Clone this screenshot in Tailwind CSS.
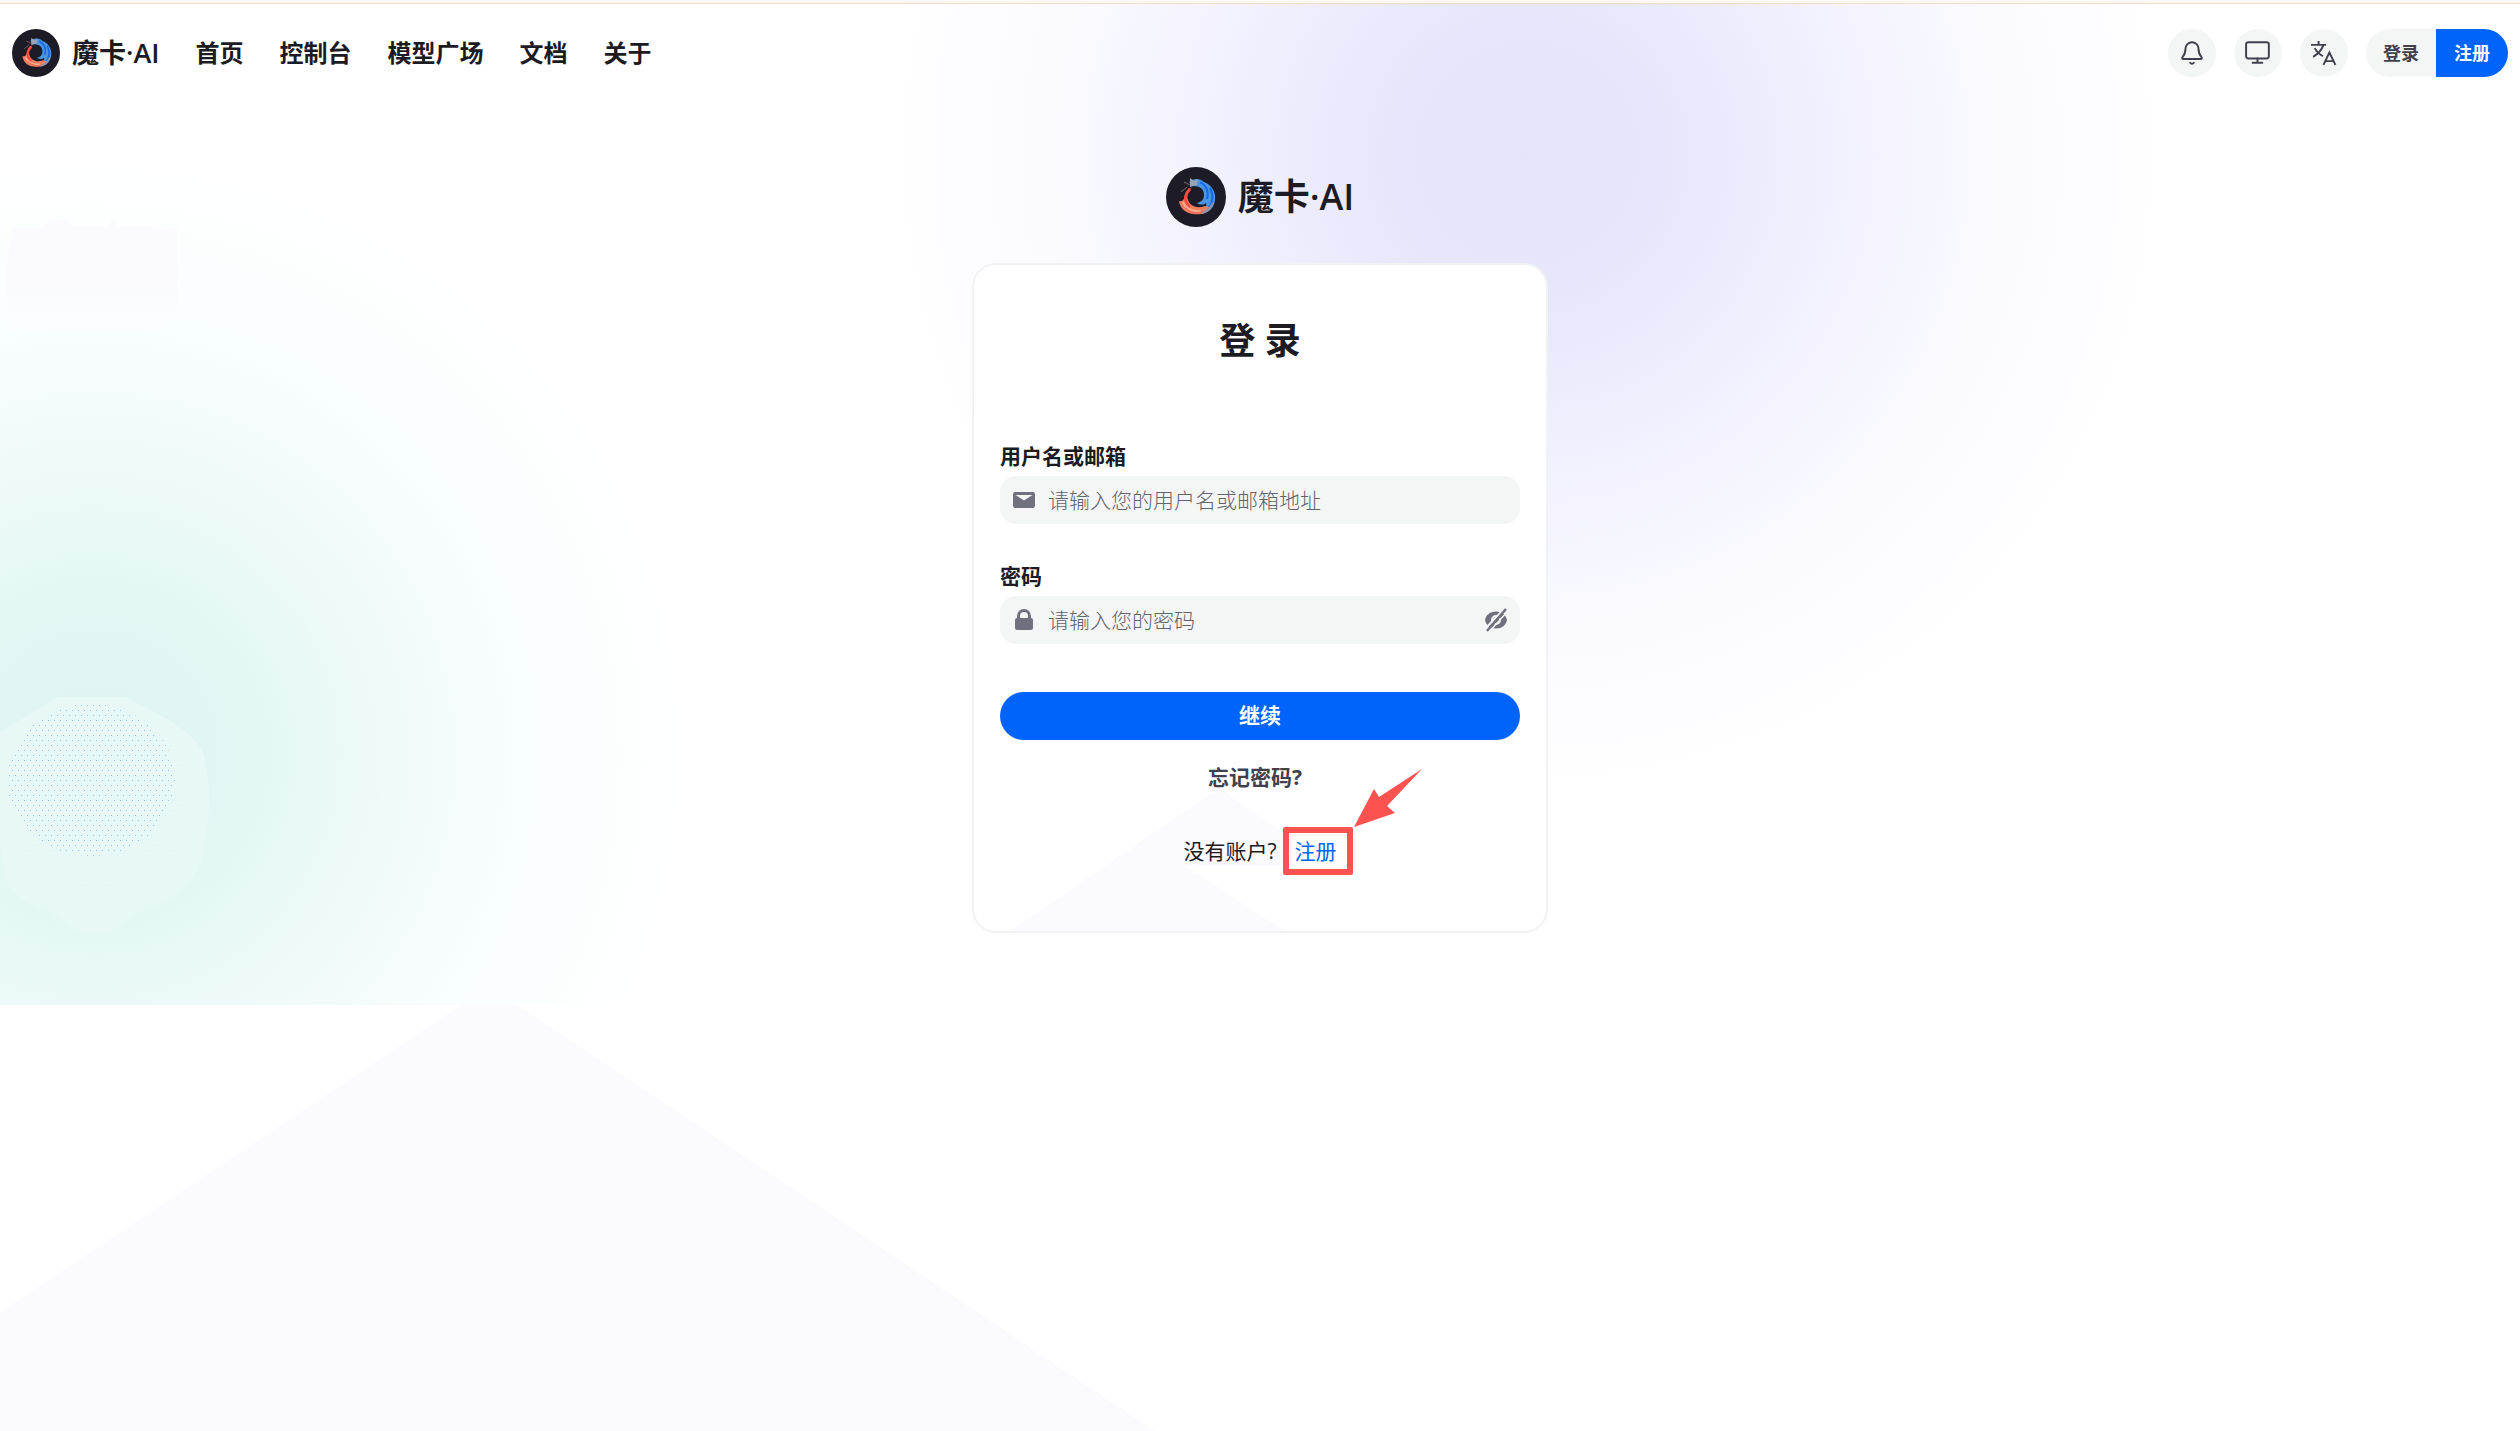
<!DOCTYPE html>
<html lang="zh-CN">
<head>
    <meta charset="UTF-8">
    <meta name="viewport" content="width=device-width, initial-scale=1.0">
    <title>魔卡·AI - 登录</title>
    <script src="https://cdn.jsdelivr.net/npm/@tailwindcss/browser@4"></script>
</head>
<body class="relative min-h-screen overflow-x-hidden bg-white font-['Open_Sans','Noto_Sans_CJK_SC',sans-serif] text-[#1c1b24]">
    <!-- Logo shared by the header and the form -->
    <svg class="hidden" aria-hidden="true">
        <symbol id="logo" viewBox="0 0 60 60">
            <circle cx="30" cy="30" r="30" fill="#1c1b26"/>
            <path d="M23 15C27 11 34 11 38 15c8 3 12 10 11 18-1 8-6 13-14 14 4-4 6-7 5-11-2 2-6 2-9 0 4-1 7-3 7-8 0-6-4-9-11-9z" fill="#4b94e0"/>
            <path d="M34 15c7 4 9 10 7 17M44 21c4 8 3 16-4 23" fill="none" stroke="#1268ee" stroke-width="2"/>
            <path d="M26 20c-4 4-6 8-4 13 2 6 9 9 17 6l6 2c-4 6-12 7-18 6C19 46 14 41 13 34c4 1 5-2 6-5 1-4 3-7 7-9z" fill="#ec7f62"/>
            <path d="M24 22c-6 6-6 13 0 18" fill="none" stroke="#ff4a42" stroke-width="3"/>
            <path d="M17 35c3 7 9 10 18 9" fill="none" stroke="#f4b08a" stroke-width="2"/>
            <path d="M20 41c5 5 12 6 17 3" fill="none" stroke="#ff5a4c" stroke-width="1"/>
            <path d="M36 46c6-2 9-6 11-10" fill="none" stroke="#8d93a8" stroke-width="2"/>
            <path d="M24 11l4 3 4-2-1 6-7 2z" fill="#9aa3b5"/>
            <path d="M18 15l6 3M21 20l-6 5" stroke="#7a6a70" stroke-width="1"/>
            <circle cx="31" cy="27" r="4" fill="#1c1b26"/>
        </symbol>
    </svg>

    <!-- Background -->
    <svg class="absolute inset-0 -z-10 h-full w-full" aria-hidden="true">
        <defs>
            <radialGradient id="purple" cx="1527" cy="154" r="650" gradientUnits="userSpaceOnUse">
                <stop offset="0" stop-color="#e4e5fb"/>
                <stop offset="0.22" stop-color="#e6e7fb"/>
                <stop offset="0.46" stop-color="#f1f0fe"/>
                <stop offset="0.76" stop-color="#fbfbff"/>
                <stop offset="1" stop-color="#ffffff"/>
            </radialGradient>
            <radialGradient id="green" cx="94" cy="754" r="600" gradientUnits="userSpaceOnUse">
                <stop offset="0" stop-color="#dff5f2"/>
                <stop offset="0.2" stop-color="#e1f6f4"/>
                <stop offset="0.38" stop-color="#e9f9f7"/>
                <stop offset="0.55" stop-color="#f2fbfa"/>
                <stop offset="0.75" stop-color="#fafefe"/>
                <stop offset="1" stop-color="#ffffff"/>
            </radialGradient>
            <linearGradient id="patch" x1="0" y1="0" x2="0" y2="1">
                <stop offset="0.4" stop-color="#fbfaff"/>
                <stop offset="1" stop-color="#fafdff"/>
            </linearGradient>
            <pattern id="dots" width="6" height="10" patternUnits="userSpaceOnUse">
                <rect width="1" height="1" fill="#8ec8f4"/>
                <rect x="3" y="5" width="1" height="1" fill="#8ec8f4"/>
            </pattern>
            <pattern id="faintDots" width="6" height="10" patternUnits="userSpaceOnUse">
                <rect width="1" height="1" fill="#e9eef1"/>
                <rect x="3" y="5" width="1" height="1" fill="#e9eef1"/>
            </pattern>
        </defs>
        <circle cx="1527" cy="154" r="650" fill="url(#purple)"/>
        <path d="M0 154h694v851H0z" fill="url(#green)"/>
        <path d="M13 228H40L54 220H68L72 226H108L112 220L118 226L177 228V316L160 332H7V262z" fill="url(#patch)"/>
        <path d="M58 697H126L160 715Q202 738 205 760Q214 800 204 850Q196 890 160 904Q135 912 111 932H76L48 910Q15 902 5 880Q0 860 0 840V732z" fill="#e7f8f7"/>
        <ellipse cx="97" cy="800" rx="96" ry="92" fill="url(#faintDots)"/>
        <ellipse cx="91" cy="780" rx="84" ry="76" fill="url(#dots)"/>
        <path d="M461 1005H517L1155 1431H0V1312z" fill="#fbfaff"/>
    </svg>

    <div class="h-[3px] bg-[#fef8f2]"></div>
    <div class="h-px bg-[#f5dfcc]"></div>

    <!-- Header -->
    <header class="flex h-[98px] items-center justify-between px-3">
        <div class="flex items-center gap-9">
            <a href="#" class="flex items-center gap-3 text-[27px] leading-9 font-bold">
                <svg class="size-12"><use href="#logo"/></svg>
                <span>魔卡<span class="font-semibold">·AI</span></span>
            </a>
            <nav class="flex gap-9 text-2xl font-bold">
                <a href="#">首页</a>
                <a href="#">控制台</a>
                <a href="#">模型广场</a>
                <a href="#">文档</a>
                <a href="#">关于</a>
            </nav>
        </div>

        <div class="flex items-center gap-[18px] text-[#41404d]">
            <button type="button" aria-label="通知" class="flex size-12 items-center justify-center rounded-full bg-[#f4f6f5]">
                <svg class="size-[26px]" viewBox="0 0 24 24" fill="none" stroke="currentColor" stroke-width="1.8" stroke-linecap="round" stroke-linejoin="round">
                    <path d="M6 8a6 6 0 0 1 12 0c0 4.500 1.200 6 2.800 7.800.7.700.200 1.700-.8 1.700H4c-1 0-1.500-1-.8-1.700C4.800 14 6 12.500 6 8"/>
                    <path d="M10.300 21a2 2 0 0 0 3.400 0"/>
                </svg>
            </button>
            <button type="button" aria-label="主题" class="flex size-12 items-center justify-center rounded-full bg-[#f4f6f5]">
                <svg class="size-[26px]" viewBox="0 0 24 24" fill="none" stroke="currentColor" stroke-width="1.8" stroke-linecap="round" stroke-linejoin="round">
                    <rect x="1" y="2" width="21" height="15" rx="2"/>
                    <path d="M11.500 17v4M7 21h9"/>
                </svg>
            </button>
            <button type="button" aria-label="语言" class="flex size-12 items-center justify-center rounded-full bg-[#f4f6f5]">
                <svg class="size-[26px]" viewBox="0 0 24 24" fill="none" stroke="currentColor" stroke-width="1.8">
                    <path d="M0 4.500h14M7 1v3.500M11.500 4.500C10 9 7 12.500 2 15.500M3.500 7.500C5 10.500 7.500 13 11 15"/>
                    <path d="M11.500 23L17 11.500 22.500 23M13.500 19.500h7"/>
                </svg>
            </button>
            <div class="flex overflow-hidden rounded-full text-lg font-bold">
                <button type="button" class="h-12 w-[70px] bg-[#f4f6f5]">登录</button>
                <button type="button" class="h-12 w-[72px] bg-[#0064fa] text-white">注册</button>
            </div>
        </div>
    </header>

    <!-- Login -->
    <main class="flex flex-col items-center pt-[65px] pb-12">
        <div class="mb-9 flex items-center gap-3">
            <svg class="size-15"><use href="#logo"/></svg>
            <h1 class="text-4xl font-bold">魔卡<span class="font-semibold">·AI</span></h1>
        </div>

        <section class="relative w-full max-w-[576px] overflow-hidden rounded-3xl border-2 border-[#f1f2f4] bg-white px-[26px] pt-13 pb-16">
            <svg class="absolute bottom-0 left-9" width="275" height="143" aria-hidden="true">
                <path d="M209 0L273 44V78H176L275 143H0z" fill="#fbfaff"/>
            </svg>
            <form class="relative">
                <h2 class="mb-[75px] text-center text-4xl leading-12 font-bold">登 录</h2>

                <label for="username" class="mb-1 block text-[21px] leading-8 font-bold">用户名或邮箱</label>
                <div class="mb-9 flex h-12 items-center gap-3 rounded-2xl bg-[#f4f6f5] px-3 text-[#70717e]">
                    <svg class="size-6" viewBox="0 0 24 24" fill="currentColor">
                        <path d="M3 4h18a2 2 0 0 1 2 2v12a2 2 0 0 1-2 2H3a2 2 0 0 1-2-2V6a2 2 0 0 1 2-2zm.5 3l8.500 5.500L20.500 7z" fill-rule="evenodd"/>
                    </svg>
                    <input id="username" type="text" placeholder="请输入您的用户名或邮箱地址" class="min-w-0 flex-1 bg-transparent text-[21px] leading-8 font-light text-[#1c1b24] outline-none placeholder:text-[#62636f]">
                </div>

                <label for="password" class="mb-1 block text-[21px] leading-8 font-bold">密码</label>
                <div class="mb-12 flex h-12 items-center gap-3 rounded-2xl bg-[#f4f6f5] px-3 text-[#70717e]">
                    <svg class="size-6" viewBox="0 0 24 24" fill="currentColor">
                        <path d="M5 10V8a7 7 0 0 1 14 0v2a2 2 0 0 1 2 2v8a2 2 0 0 1-2 2H5a2 2 0 0 1-2-2v-8a2 2 0 0 1 2-2zm3 0h8V8a4 4 0 0 0-8 0z" fill-rule="evenodd"/>
                    </svg>
                    <input id="password" type="password" placeholder="请输入您的密码" class="min-w-0 flex-1 bg-transparent text-[21px] leading-8 font-light text-[#1c1b24] outline-none placeholder:text-[#62636f]">
                    <button type="button" aria-label="显示密码">
                        <svg class="size-6" viewBox="0 0 24 24" fill="none" stroke="currentColor">
                            <path d="M12 3.500C6 3.500 2 7 1 12c1 5 5 8.500 11 8.500s10-3.500 11-8.500c-1-5-5-8.500-11-8.500zm0 3.500a5 5 0 1 1 0 10 5 5 0 0 1 0-10z" fill="currentColor" fill-rule="evenodd" stroke="none"/>
                            <circle cx="12" cy="12" r="3" fill="currentColor" stroke="none"/>
                            <path d="M1 21L20 1" stroke="#f4f6f5" stroke-width="2"/>
                            <path d="M3 23L22 1" stroke-width="2.500"/>
                            <path d="M5 24L24 3" stroke="#f4f6f5" stroke-width="1.500"/>
                        </svg>
                    </button>
                </div>

                <button type="submit" class="mb-[21px] block h-12 w-full rounded-full bg-[#0064fa] text-[21px] font-bold text-white">继续</button>
                <button type="button" class="mx-auto mb-[42px] block pr-2.5 text-[21px] leading-8 font-bold text-[#41404d]">忘记密码?</button>

                <p class="flex items-center justify-center gap-[18px] text-[21px] leading-8">
                    <span>没有账户?</span>
                    <span class="relative">
                        <a href="#" class="text-[#0064fa]">注册</a>
                        <span class="pointer-events-none absolute -top-2 -right-4 -bottom-2 -left-3 rounded-xs border-6 border-[#fc5351]"></span>
                        <svg class="absolute bottom-10 left-[59px]" width="70" height="58" aria-hidden="true">
                            <path d="M0 58L20 20L25 28L68 0L33 37L41 44z" fill="#fc5351"/>
                        </svg>
                    </span>
                </p>
            </form>
        </section>
    </main>
</body>
</html>
